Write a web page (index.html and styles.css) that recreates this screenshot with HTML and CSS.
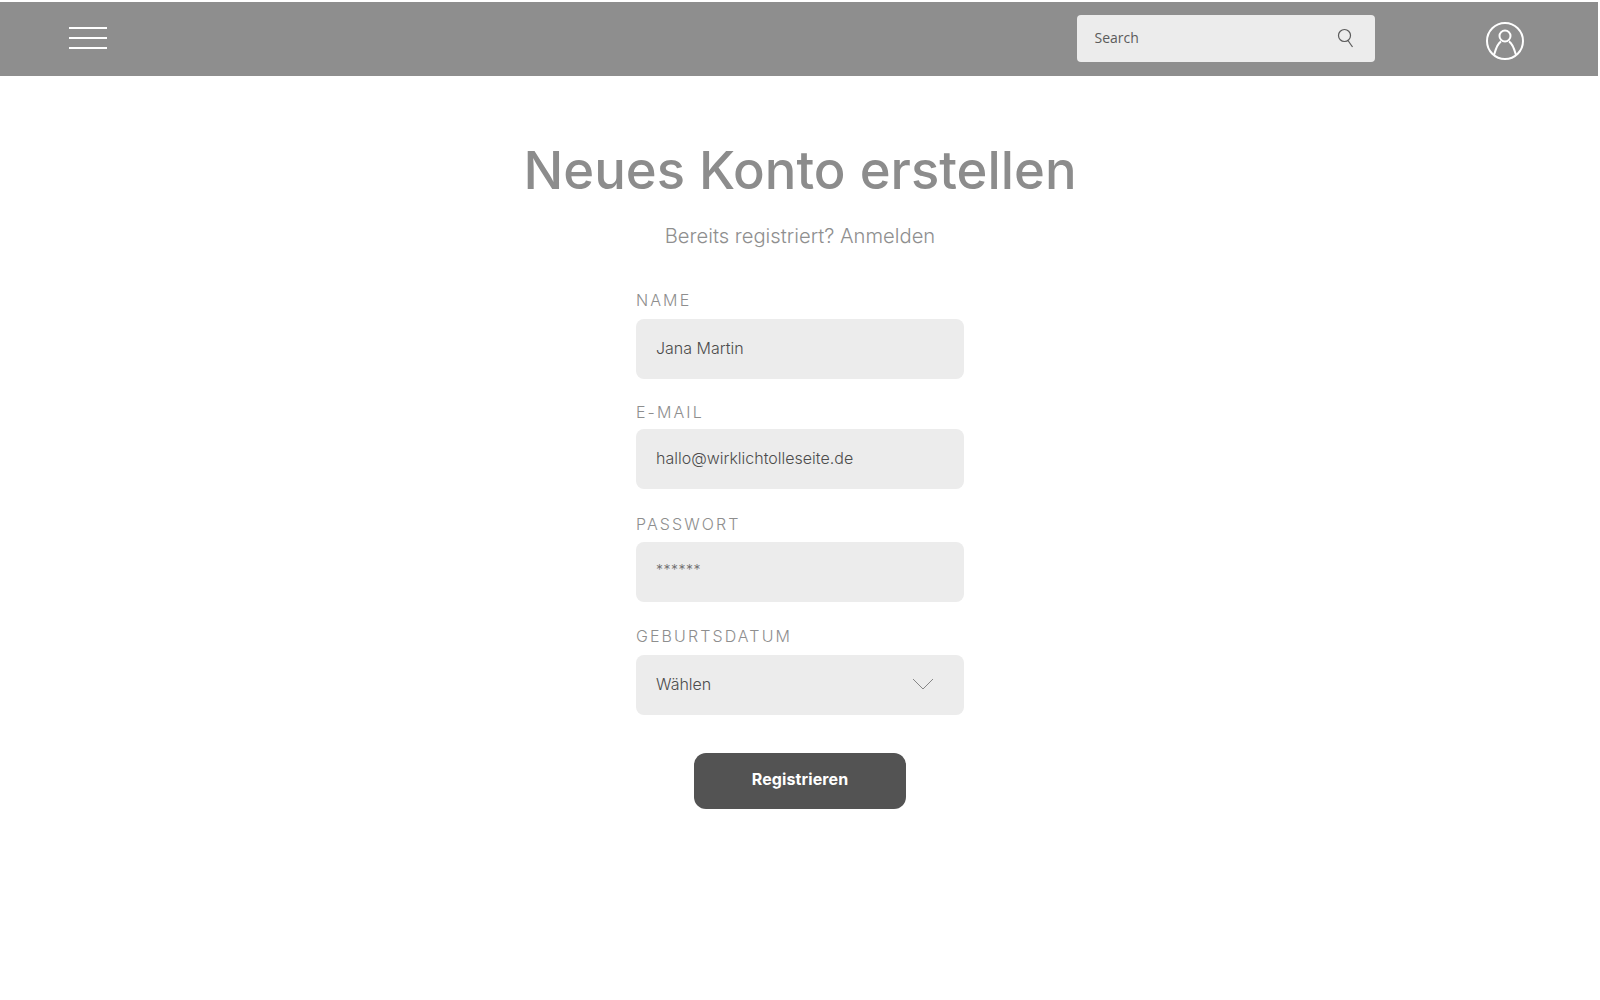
FILE: index.html
```html
<!DOCTYPE html>
<html lang="de">
<head>
<meta charset="utf-8">
<title>Neues Konto erstellen</title>
<link rel="stylesheet" href="styles.css">
</head>
<body>
<header class="topbar">
  <button class="menu" aria-label="Menü"><span></span><span></span><span></span></button>
  <div class="search">
    <span class="search-text">Search</span>
    <svg class="search-icon" width="18" height="20" viewBox="0 0 18 20" fill="none" stroke="#5a5a5a" stroke-width="1.2"><circle cx="7.5" cy="7.5" r="6"/><path d="M11 12.5 L15.5 19"/></svg>
  </div>
  <svg class="avatar" width="40" height="40" viewBox="0 0 40 40" fill="none" stroke="#fff" stroke-width="2"><circle cx="20" cy="20" r="18"/><circle cx="20" cy="15" r="5.5"/><path d="M9 34 C11 27 13 22 16 20.5 M31 34 C29 27 27 22 24 20.5"/></svg>
</header>
<main class="content">
  <h1 class="title">Neues Konto erstellen</h1>
  <p class="subtitle">Bereits registriert? Anmelden</p>
  <form class="form">
    <div class="field field-name">
      <label class="label">NAME</label>
      <div class="control">Jana Martin</div>
    </div>
    <div class="field field-email">
      <label class="label">E-MAIL</label>
      <div class="control">hallo@wirklichtolleseite.de</div>
    </div>
    <div class="field field-pass">
      <label class="label">PASSWORT</label>
      <div class="control control-pass"><span class="stars">******</span></div>
    </div>
    <div class="field field-date">
      <label class="label">GEBURTSDATUM</label>
      <div class="control control-select">Wählen
        <svg width="22" height="12" viewBox="0 0 22 12" fill="none" stroke="#7a7a7a" stroke-width="0.9"><path d="M1 1 L11 11 L21 1"/></svg>
      </div>
    </div>
    <button class="submit" type="button">Registrieren</button>
  </form>
</main>
</body>
</html>
```
FILE: styles.css
```css
* { box-sizing: border-box; }
html, body { margin: 0; padding: 0; background: #fff; }
body { width: 1600px; height: 1000px; overflow: hidden; font-family: "Inter", "Liberation Sans", sans-serif; padding-top: 2px; }

.topbar {
  width: 1598px; height: 74px; background: #8e8e8e;
  display: flex; align-items: flex-start;
  padding-left: 69px;
}
.menu {
  width: 38px; height: 22px; margin-top: 25px; padding: 0; border: 0; background: none;
  display: flex; flex-direction: column; justify-content: space-between;
}
.menu span { display: block; height: 2px; background: #fff; }
.search {
  width: 298px; height: 47px; margin-top: 13px; margin-left: 969.5px;
  background: #ececec; border-radius: 4px;
  display: flex; align-items: center; justify-content: space-between;
  padding: 0 20px 2px 18px;
}
.search-text { font: 14px "Open Sans", sans-serif; color: #5b5b5b; }
.search-icon { margin-top: 1px; }
.avatar { margin-top: 19px; margin-left: 110px; }

.content { display: flex; flex-direction: column; align-items: center; }
.title {
  margin: 60px 0 0; font-size: 52.6px; line-height: 68px; font-weight: 500; color: #8c8c8c;
  font-family: "Inter", sans-serif;
}
.subtitle {
  margin: 18px 0 0; font-size: 20.2px; line-height: 28px; color: #8f8f8f; font-weight: 300;
  font-family: "Inter", sans-serif;
}
.form { width: 328px; margin-top: 41px; display: flex; flex-direction: column; align-items: center; }
.field { width: 100%; margin-bottom: 25px; }
.field-name { margin-bottom: 21.5px; }
.field-date { margin-bottom: 38px; }
.label {
  display: block; height: 28px; line-height: 20px; font-size: 16px; letter-spacing: 2.1px; color: #8e8e8e;
  font-family: "Inter", sans-serif; font-weight: 300;
}
.field-name .label, .field-date .label { line-height: 18px; }
.field-email .label { line-height: 22px; }
.control {
  height: 60px; background: #ececec; border-radius: 8px;
  display: flex; align-items: center; padding: 0 20px 2px;
  font-size: 16px; font-weight: 300; color: #4c4c4c; font-family: "Inter", sans-serif;
}
.control-pass { padding-bottom: 4px; }
.stars { font-size: 14px; color: #6e6e6e; letter-spacing: 0.5px; }
.control-select { justify-content: space-between; padding-right: 30px; }
.submit {
  width: 212px; height: 56px; border: 0; border-radius: 12px; background: #535353; color: #fff;
  font: 700 16px "Inter", sans-serif; letter-spacing: 0.1px; padding: 0 0 4px;
}
```
